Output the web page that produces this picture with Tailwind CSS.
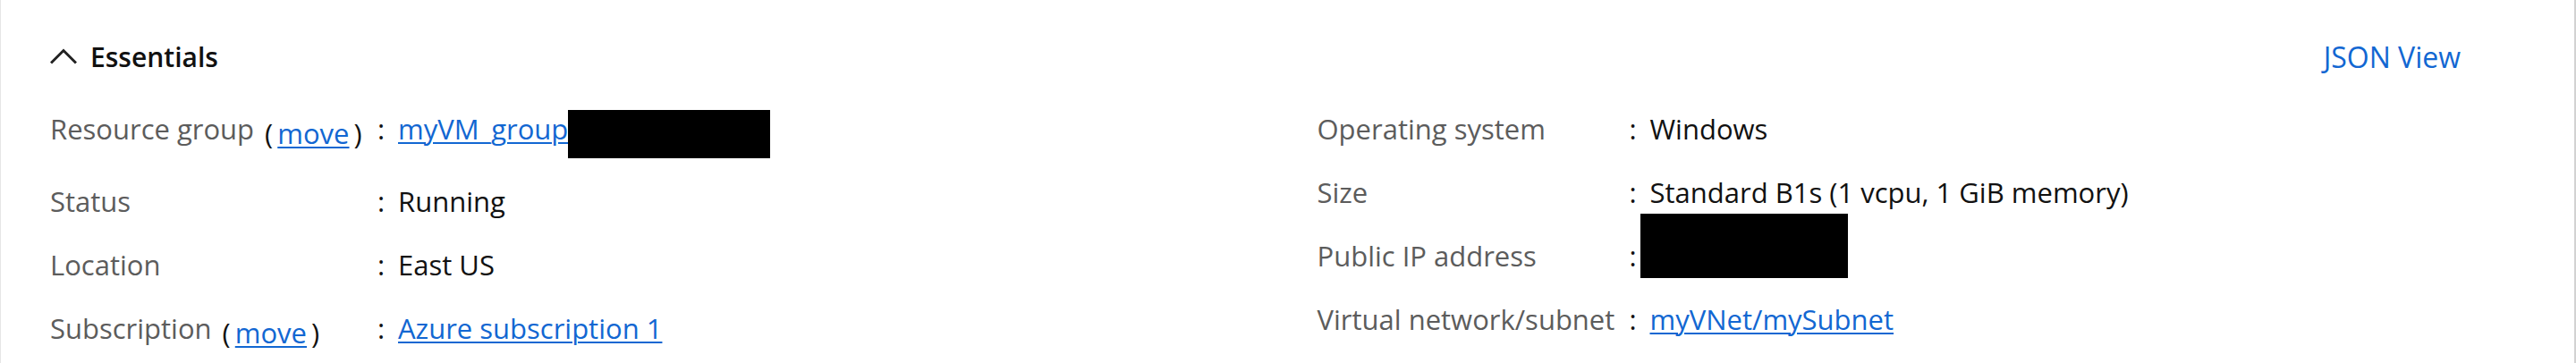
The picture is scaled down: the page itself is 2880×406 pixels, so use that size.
<!DOCTYPE html>
<html lang="en">
<head>
<meta charset="utf-8">
<meta name="viewport" content="width=device-width, initial-scale=1">
<title>Essentials</title>
<script src="https://cdn.jsdelivr.net/npm/@tailwindcss/browser@4"></script>
</head>
<body class="bg-white">
<main class="flex min-h-screen flex-col border-l border-[#e6e6e6] border-r-2 border-r-[#d2d2d2] font-['Open_Sans',sans-serif] text-[31px] leading-[44px] text-[#111111]">
  <header class="flex items-center justify-between pt-[42px] pr-[127px] pl-[55px]">
    <button type="button" aria-expanded="true" class="flex items-center gap-[15px] font-['Open_Sans',sans-serif] text-[30px] font-semibold">
      <svg class="h-[20px] w-[30px]" viewBox="0 0 30 20" fill="none" stroke="#222" stroke-width="3" aria-hidden="true"><path d="M1 16.5 15 2.5 29 16.5"/></svg>
      Essentials
    </button>
    <a href="#json" class="text-[32px] text-[#1267d2]">JSON View</a>
  </header>
  <div class="grid grid-cols-2 gap-x-[66px] px-[55px] pt-[36px]">
    <dl class="flex flex-col gap-[27px]">
      <div class="flex h-[54px]">
        <dt class="flex w-[366px] shrink-0 gap-3 text-[#5c5c5c]">Resource group <span class="flex gap-[5px] pt-[5px] text-[#111111]">(<a href="#move-group" class="text-[#1267d2] underline decoration-2 underline-offset-3">move</a>)</span></dt>
        <dd class="flex"><span class="w-[23px]">:</span><span class="relative"><a href="#group" class="text-[#1267d2] underline decoration-2 underline-offset-3">myVM_group</a><span class="absolute top-px left-[190px] h-[54px] w-[226px] bg-black"></span></span></dd>
      </div>
      <div class="flex">
        <dt class="w-[366px] shrink-0 text-[#5c5c5c]">Status</dt>
        <dd class="flex"><span class="w-[23px]">:</span>Running</dd>
      </div>
      <div class="flex">
        <dt class="w-[366px] shrink-0 text-[#5c5c5c]">Location</dt>
        <dd class="flex"><span class="w-[23px]">:</span>East US</dd>
      </div>
      <div class="flex">
        <dt class="flex w-[366px] shrink-0 gap-3 text-[#5c5c5c]">Subscription <span class="flex gap-[5px] pt-[5px] text-[#111111]">(<a href="#move-subscription" class="text-[#1267d2] underline decoration-2 underline-offset-3">move</a>)</span></dt>
        <dd class="flex"><span class="w-[23px]">:</span><a href="#subscription" class="text-[#1267d2] underline decoration-2 underline-offset-3">Azure subscription 1</a></dd>
      </div>
    </dl>
    <dl class="flex flex-col gap-[27px]">
      <div class="flex">
        <dt class="w-[349px] shrink-0 text-[#5c5c5c]">Operating system</dt>
        <dd class="flex"><span class="w-[23px]">:</span>Windows</dd>
      </div>
      <div class="flex">
        <dt class="w-[349px] shrink-0 text-[#5c5c5c]">Size</dt>
        <dd class="flex"><span class="w-[23px]">:</span>Standard B1s (1 vcpu, 1 GiB memory)</dd>
      </div>
      <div class="flex">
        <dt class="w-[349px] shrink-0 text-[#5c5c5c]">Public IP address</dt>
        <dd class="relative flex"><span class="w-[23px]">:</span><span class="absolute -top-[25px] left-[12px] h-[72px] w-[232px] bg-black"></span></dd>
      </div>
      <div class="flex">
        <dt class="w-[349px] shrink-0 text-[#5c5c5c]">Virtual network/subnet</dt>
        <dd class="flex"><span class="w-[23px]">:</span><a href="#vnet" class="text-[#1267d2] underline decoration-2 underline-offset-3">myVNet/mySubnet</a></dd>
      </div>
    </dl>
  </div>
</main>
</body>
</html>
